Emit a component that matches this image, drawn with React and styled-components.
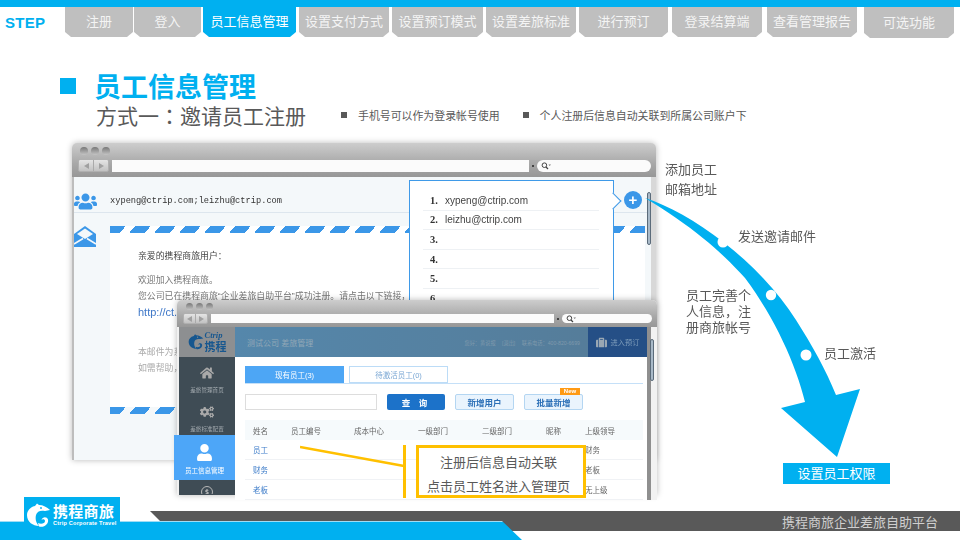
import React from "react";
import styled, { createGlobalStyle } from "styled-components";
import { FaUsers, FaHome, FaCogs, FaUser, FaSuitcase, FaDollarSign } from "react-icons/fa";

const BLUE = "#00b0f0";
const CJK = `"Liberation Sans", "Noto Sans CJK SC", sans-serif`;

const steps = [
  { label: "注册", w: 68, gap: 0 },
  { label: "登入", w: 67, gap: 1 },
  { label: "员工信息管理", w: 93, gap: 2, active: true },
  { label: "设置支付方式", w: 90, gap: 3 },
  { label: "设置预订模式", w: 91, gap: 3 },
  { label: "设置差旅标准", w: 90, gap: 3 },
  { label: "进行预订", w: 89, gap: 3 },
  { label: "登录结算端", w: 90, gap: 4 },
  { label: "查看管理报告", w: 90, gap: 5 },
  { label: "可选功能", w: 90, gap: 7, tall: true },
];

const emails = ["xypeng@ctrip.com", "leizhu@ctrip.com", "", "", "", ""];

const columns = ["姓名", "员工编号", "成本中心", "一级部门", "二级部门", "昵称", "上级领导"];
const staff = [
  { name: "员工", boss: "财务" },
  { name: "财务", boss: "老板" },
  { name: "老板", boss: "无上级" },
];

const GlobalStyle = createGlobalStyle`
  html, body {
    margin: 0;
    padding: 0;
    background: #fff;
    overflow: hidden;
  }
  * {
    box-sizing: border-box;
  }
`;

const Page = styled.div`
  width: 960px;
  height: 540px;
  display: flex;
  flex-direction: column;
  font-family: ${CJK};
  color: #595959;
  background: #fff;
`;

const TopLine = styled.div`
  height: 7px;
  background: ${BLUE};
`;

const StepBar = styled.nav`
  height: 30px;
  display: flex;
  align-items: flex-start;
`;

const StepLabel = styled.div`
  width: 65px;
  padding: 7px 0 0 5px;
  font-size: 15px;
  line-height: 18px;
  font-weight: bold;
  letter-spacing: 0.3px;
  color: ${BLUE};
`;

const Step = styled.div`
  width: ${(p) => p.$w}px;
  margin-left: ${(p) => p.$gap}px;
  height: ${(p) => (p.$tall ? 31 : 30)}px;
  padding-bottom: ${(p) => (p.$tall ? 3 : 4)}px;
  display: flex;
  align-items: center;
  justify-content: center;
  font-size: 13px;
  white-space: nowrap;
  color: ${(p) => (p.$active ? "#fff" : "#f4f4f4")};
  background: ${(p) => (p.$active ? BLUE : "#bfbfbf")};
  clip-path: polygon(0 0, 100% 0, 100% calc(100% - 5px), calc(100% - 6px) 100%, 6px 100%, 0 calc(100% - 5px));
`;

const Heading = styled.header`
  height: 106px;
  padding: 36px 0 0 60px;
  display: grid;
  grid-template-columns: 35px auto;
  grid-template-rows: 30px 28px;
  align-items: center;
`;

const TitleMark = styled.span`
  width: 16px;
  height: 16px;
  margin-top: -4px;
  background: ${BLUE};
`;

const Title = styled.h1`
  margin: 0 0 0 -1px;
  font-size: 27px;
  line-height: 30px;
  font-weight: bold;
  color: ${BLUE};
`;

const SubRow = styled.div`
  grid-column: 2;
  display: flex;
  align-items: center;
  margin-top: -4px;
  padding-left: 1px;
`;

const SubTitle = styled.h2`
  margin: 0 35px 0 0;
  font-size: 21px;
  font-weight: normal;
  white-space: nowrap;
  color: #595959;
`;

const CenterPunct = styled.span`
  font-family: "Noto Sans CJK TC", sans-serif;
`;

const Hint = styled.span`
  display: flex;
  align-items: center;
  gap: 11px;
  margin-right: 23px;
  font-size: 10.9px;
  white-space: nowrap;
  color: #595959;
  &::before {
    content: "";
    width: 6px;
    height: 6px;
    background: #595959;
  }
`;

const Stage = styled.main`
  position: relative;
  height: 354px;
`;

const Browser = styled.section`
  position: absolute;
  left: ${(p) => p.$x}px;
  top: ${(p) => p.$y}px;
  width: ${(p) => p.$w}px;
  height: ${(p) => p.$h}px;
  border-radius: 5px 5px 0 0;
  background: #f1f1f1;
  box-shadow: 0 0 6px rgba(0, 0, 0, 0.28);
  filter: blur(0.3px);
`;

const Chrome = styled.div`
  height: ${(p) => p.$h}px;
  padding: 3px 5px 0 6px;
  border-radius: 5px 5px 0 0;
  background: linear-gradient(#cdcdcd, #a8a8a8 60%, #979797);
`;

const Lights = styled.div`
  display: flex;
  gap: 3px;
  margin-left: ${(p) => p.$left}px;
  height: ${(p) => p.$h}px;
  align-items: center;
`;

const Light = styled.i`
  width: ${(p) => p.$size}px;
  height: ${(p) => p.$size}px;
  border-radius: 50%;
  background: linear-gradient(#777, #c4c4c4);
`;

const AddressRow = styled.div`
  display: flex;
  align-items: center;
  margin-top: 3px;
`;

const NavPair = styled.div`
  width: ${(p) => p.$w}px;
  height: ${(p) => p.$h}px;
  display: flex;
  border-radius: 2px;
  background: linear-gradient(#e4e4e4, #c2c2c2);
  border: 1px solid #b0b0b0;
`;

const NavArrow = styled.span`
  flex: 1;
  display: flex;
  align-items: center;
  justify-content: center;
  & + & {
    border-left: 1px solid #aaa;
  }
  &::before {
    content: "";
    border-top: 3px solid transparent;
    border-bottom: 3px solid transparent;
    border-left: ${(p) => (p.$back ? "0" : "5px solid #a0a0a0")};
    border-right: ${(p) => (p.$back ? "5px solid #a0a0a0" : "0")};
  }
`;

const Url = styled.div`
  width: ${(p) => p.$w}px;
  height: ${(p) => p.$h}px;
  margin-left: 3px;
  background: #fbfbfb;
`;

const Dot = styled.span`
  width: 2px;
  height: 2px;
  margin: 0 3px;
  background: #444;
`;

const SearchBox = styled.div`
  flex: 1;
  height: ${(p) => p.$h}px;
  display: flex;
  align-items: center;
  padding-left: 4px;
  border-radius: 7px;
  background: #fbfbfb;
`;

const MailBody = styled.div`
  position: relative;
  height: 283px;
  border-left: 2px solid #bdbdbd;
  background: #f4f8fa;
`;

const MailHead = styled.div`
  height: 36px;
  display: flex;
  align-items: center;
  padding-top: 13px;
  color: #3b97e8;
  border-bottom: 1px solid #dde6ee;
`;

const HeadIcon = styled.span`
  width: 36px;
  display: flex;
  justify-content: flex-start;
  font-size: 23px;
  line-height: 0;
`;

const Address = styled.span`
  font-family: "Liberation Mono", monospace;
  font-size: 8.7px;
  color: #333;
  white-space: nowrap;
`;

const MailMain = styled.div`
  display: flex;
  padding-top: 13px;
`;

const EnvelopeSlot = styled.div`
  width: 36px;
  display: flex;
  justify-content: flex-start;
`;

const Letter = styled.article`
  width: 535px;
  height: 174px;
  padding: 16px 0 0 28px;
  background: #fff;
  font-size: 8.9px;
  color: #777;
  overflow: hidden;
`;

const StripeBar = styled.div`
  width: 535px;
  height: 7px;
  background: repeating-linear-gradient(130deg, #3b97e8 0 12px, transparent 12px 19.15px);
`;

const LetterColumn = styled.div`
  display: flex;
  flex-direction: column;
`;

const TopStripes = styled(StripeBar)`
  background-color: #fff;
`;

const Greeting = styled.p`
  margin: 0 0 12px;
  color: #444;
  white-space: nowrap;
`;

const LetterLine = styled.p`
  margin: 0 0 ${(p) => p.$after || 4}px;
  line-height: 12px;
  white-space: nowrap;
  color: ${(p) => p.$color || "#777"};
  font-size: ${(p) => p.$size || 8.9}px;
`;

const Popup = styled.div`
  position: absolute;
  left: 335px;
  top: 3px;
  width: 205px;
  height: 280px;
  padding: 10px 14px 0 13px;
  background: #fff;
  border: 1px solid #3f9ae8;
  z-index: 2;
  &::after {
    content: "";
    position: absolute;
    right: -6px;
    top: 14px;
    width: 11px;
    height: 11px;
    background: #fff;
    border-top: 1px solid #3f9ae8;
    border-right: 1px solid #3f9ae8;
    transform: rotate(45deg);
  }
`;

const EmailRow = styled.div`
  height: 19.6px;
  display: flex;
  align-items: center;
  gap: 6px;
  padding-left: 7px;
  border-bottom: 1px solid #eef1f4;
  font-size: 10px;
  color: #444;
`;

const RowNumber = styled.b`
  width: 9px;
  font-family: "Liberation Serif", serif;
  font-size: 10.5px;
  color: #333;
`;

const AddButton = styled.span`
  position: absolute;
  left: 550px;
  top: 14px;
  width: 18px;
  height: 18px;
  border-radius: 50%;
  display: flex;
  align-items: center;
  justify-content: center;
  background: #3b97e8;
  color: #fff;
  font-size: 15px;
  line-height: 18px;
  font-weight: bold;
  z-index: 2;
`;

const Scrollbar = styled.span`
  position: absolute;
  left: ${(p) => p.$x}px;
  top: ${(p) => p.$y}px;
  width: 4px;
  height: ${(p) => p.$h}px;
  border-radius: 2px;
  border: 1px solid #5b6b7a;
  background: #a9bac9;
`;

const EdgeStrip = styled.span`
  position: absolute;
  right: 0;
  top: 0;
  bottom: 0;
  width: 5px;
  background: #d8d8d8;
`;

const AppFrame = styled.div`
  display: grid;
  grid-template-columns: 56px 412px 10px;
  height: 168px;
  padding-left: 2px;
`;

const SideNav = styled.aside`
  display: flex;
  flex-direction: column;
  height: 168px;
  background: #3f4c55;
`;

const BrandCell = styled.div`
  height: 30px;
  flex-shrink: 0;
  display: flex;
  align-items: center;
  justify-content: center;
  gap: 1px;
  background: #8d8f91;
`;

const BrandText = styled.div`
  display: flex;
  flex-direction: column;
  gap: 1px;
  color: #17578f;
  font-weight: bold;
`;

const BrandEn = styled.span`
  font-family: "Liberation Serif", serif;
  font-style: italic;
  font-size: 8.5px;
  line-height: 9px;
`;

const BrandCn = styled.span`
  font-size: 11px;
  line-height: 12px;
  white-space: nowrap;
`;

const SideItem = styled.div`
  height: ${(p) => (p.$active ? 45 : 39)}px;
  flex-shrink: 0;
  margin-left: ${(p) => (p.$active ? -5 : 0)}px;
  padding-top: 9px;
  display: flex;
  flex-direction: column;
  align-items: center;
  gap: ${(p) => (p.$active ? 4 : 6)}px;
  font-size: ${(p) => (p.$active ? 6.5 : 5.6)}px;
  white-space: nowrap;
  color: ${(p) => (p.$active ? "#fff" : "#a2a9ae")};
  background: ${(p) => (p.$active ? "#4da6f8" : "transparent")};
  svg {
    font-size: ${(p) => (p.$active ? 17 : 14)}px;
    color: ${(p) => (p.$active ? "#fff" : "#a9a9a9")};
  }
`;

const SideCutItem = styled.div`
  height: 14px;
  padding-top: 6px;
  display: flex;
  justify-content: center;
  overflow: hidden;
`;

const DollarRing = styled.span`
  width: 12px;
  height: 12px;
  flex-shrink: 0;
  border: 1px solid #b8b8b8;
  border-radius: 50%;
  display: flex;
  align-items: center;
  justify-content: center;
  font-size: 6px;
  color: #c4c4c4;
`;

const AppMain = styled.div`
  display: flex;
  flex-direction: column;
  background: #fff;
`;

const AppHeader = styled.div`
  height: 30px;
  display: flex;
  align-items: center;
  background: linear-gradient(90deg, #5587ab, #557b97);
`;

const CompanyName = styled.span`
  flex: 1;
  padding-left: 12px;
  font-size: 8px;
  color: #93a8b7;
`;

const UserInfo = styled.span`
  margin-right: 8px;
  font-size: 5.2px;
  color: #7f99ac;
  white-space: nowrap;
  word-spacing: 5px;
`;

const BookButton = styled.span`
  width: 59px;
  height: 30px;
  display: flex;
  align-items: center;
  justify-content: center;
  gap: 4px;
  font-size: 7.2px;
  color: #7f9dbb;
  background: #254f86;
  svg {
    font-size: 11px;
    color: #9aa7b3;
  }
`;

const AppContent = styled.div`
  flex: 1;
  display: flex;
  flex-direction: column;
  width: 408px;
  padding-top: 9px;
  background: #fff;
`;

const TabRow = styled.div`
  margin-left: 10px;
  height: 18px;
  display: flex;
  gap: 5px;
  border-bottom: 1px solid #c5e0f8;
`;

const TabItem = styled.span`
  width: 99px;
  display: flex;
  align-items: center;
  justify-content: center;
  font-size: 7.5px;
  color: ${(p) => (p.$on ? "#fff" : "#7aa7d4")};
  background: ${(p) => (p.$on ? "#4da6f5" : "#fff")};
  border: 1px solid ${(p) => (p.$on ? "#4da6f5" : "#bcdcf7")};
`;

const ToolRow = styled.div`
  margin: 10px 0 10px 10px;
  height: 16px;
  display: flex;
`;

const SearchInput = styled.div`
  width: 132px;
  border: 1px solid #ddd;
  background: #fff;
`;

const QueryButton = styled.span`
  width: 58px;
  margin-left: 10px;
  display: flex;
  align-items: center;
  justify-content: center;
  gap: 2px;
  border-radius: 2px;
  background: #1c72c9;
  color: #fff;
  font-size: 8.5px;
  font-weight: bold;
  letter-spacing: 3px;
`;

const GhostButton = styled.span`
  position: relative;
  width: 59px;
  margin-left: 10px;
  display: flex;
  align-items: center;
  justify-content: center;
  border-radius: 2px;
  border: 1px solid #b4d6f2;
  background: #eaf4fd;
  color: #2b6fb7;
  font-size: 8.5px;
  font-weight: bold;
`;

const NewTag = styled.em`
  position: absolute;
  right: 2px;
  top: -7px;
  width: 20px;
  height: 7px;
  font-style: normal;
  font-size: 6px;
  line-height: 7px;
  text-align: center;
  color: #fff;
  background: #ff9a14;
`;

const Grid = styled.div`
  margin-left: 10px;
  display: grid;
  grid-template-columns: 46px 63px 64px 64px 64px 39px 58px;
  grid-auto-rows: 20px;
  align-items: center;
  font-size: 7.5px;
  color: #666;
  white-space: nowrap;
`;

const HeadCell = styled.span`
  height: 20px;
  display: flex;
  align-items: center;
  padding-left: ${(p) => (p.$first ? 8 : 0)}px;
  background: #f6fafc;
`;

const BodyCell = styled.span`
  height: 20px;
  display: flex;
  align-items: center;
  padding-left: ${(p) => (p.$first ? 8 : 0)}px;
  border-bottom: 1px solid #f0f2f5;
  color: ${(p) => (p.$first ? "#3d7cc9" : "#666")};
`;

const ScrollGutter = styled.div`
  position: relative;
  background: linear-gradient(90deg, #8f8f8f 0 4px, #f2f2f2 4px);
`;

const Overlay = styled.svg`
  position: absolute;
  left: 640px;
  top: 50px;
  pointer-events: none;
`;

const Note = styled.span`
  position: absolute;
  left: ${(p) => p.$x}px;
  top: ${(p) => p.$y}px;
  width: ${(p) => (p.$w ? `${p.$w}px` : "auto")};
  font-size: 13px;
  line-height: ${(p) => p.$lh || 17}px;
  color: #595959;
  white-space: ${(p) => (p.$w ? "normal" : "nowrap")};
`;

const CalloutBox = styled.div`
  position: absolute;
  left: 416px;
  top: 302px;
  width: 170px;
  height: 53px;
  padding: 3px 5px 0 0;
  border: 3px solid #ffc000;
  background: #fff;
  text-align: center;
  font-size: 13px;
  line-height: 24px;
  color: #595959;
`;

const CalloutBracket = styled.span`
  position: absolute;
  left: 403px;
  top: 302px;
  width: 3px;
  height: 53px;
  background: #ffc000;
`;

const Leader = styled.svg`
  position: absolute;
  left: 300px;
  top: 302px;
`;

const PermissionTag = styled.div`
  position: absolute;
  left: 783px;
  top: 320px;
  width: 107px;
  height: 21px;
  line-height: 21px;
  text-align: center;
  font-size: 13px;
  color: #fff;
  background: ${BLUE};
`;

const Footer = styled.footer`
  height: 43px;
  display: grid;
`;

const GrayBand = styled.div`
  grid-area: 1 / 1;
  margin: 14px 0 0 150px;
  height: 20px;
  display: flex;
  align-items: center;
  justify-content: flex-end;
  padding-right: 22px;
  font-size: 13px;
  color: #cfcfcf;
  background: #595959;
  clip-path: polygon(0 0, 100% 0, 100% 100%, 20px 100%);
`;

const BlueBand = styled.div`
  grid-area: 1 / 1;
  align-self: end;
  width: 522px;
  height: 19px;
  background: linear-gradient(#9fdcf5 0 1px, ${BLUE} 1px);
  clip-path: polygon(0 0, 502px 0, 100% 100%, 0 100%);
`;

const LogoBox = styled.div`
  grid-area: 1 / 1;
  justify-self: start;
  position: relative;
  z-index: 1;
  margin-left: 24px;
  width: 96px;
  display: flex;
  padding: 6px 0 0 2px;
  background: ${BLUE};
  color: #fff;
`;

const LogoWords = styled.div`
  display: flex;
  flex-direction: column;
  padding-top: 1px;
  margin-left: 2px;
`;

const LogoCn = styled.span`
  font-size: 15px;
  line-height: 15px;
  font-weight: bold;
  letter-spacing: 0.3px;
  white-space: nowrap;
`;

const LogoEn = styled.span`
  font-size: 5.6px;
  line-height: 8px;
  font-weight: bold;
  letter-spacing: 0.2px;
  white-space: nowrap;
`;

function Dolphin({ size, color, eye }) {
  return (
    <svg width={size} height={size} viewBox="0 0 25 25" style={{ flexShrink: 0 }}>
      <path
        fill={color}
        d="M11 0.5 L13 2 C17 2 21 4 24 7 L19 8 C15 7 11 8 10 12 C9 16 10 20 13 23 C7 23 1 19 1 12 C1 8 4 4 9 3 Z"
      />
      <path
        fill={color}
        d="M13 23.5 C18 25 23 21 22 16.5 C21 13.5 16.5 13.5 15.5 17 C16.5 15.5 19 16 19 18 C19 20.5 15 21.5 12 20 Z"
      />
      <circle cx="15" cy="5" r="0.9" fill={eye} />
    </svg>
  );
}

function SearchGlyph() {
  return (
    <svg width="10" height="8" viewBox="0 0 10 8">
      <circle cx="3.4" cy="3.2" r="2.3" fill="none" stroke="#444" strokeWidth="1" />
      <path d="M5 5 L7 7" stroke="#444" strokeWidth="1.2" />
      <path d="M7.5 2.5 H10 L8.7 4 Z" fill="#777" />
    </svg>
  );
}

function EnvelopeGlyph() {
  return (
    <svg width="22" height="22" viewBox="0 0 22 22">
      <path fill="#3b97e8" d="M0 8 L11 0 L22 8 L22 21 L0 21 Z" />
      <path fill="#f4f8fa" d="M3 8 L11 2.5 L19 8 L11 13 Z" />
      <path fill="none" stroke="#f4f8fa" strokeWidth="1.6" d="M0 18 L9 12.5 M22 18 L13 12.5" />
    </svg>
  );
}

function WindowChrome({ big }) {
  const lightSize = big ? 8 : 7;
  return (
    <Chrome $h={big ? 34 : 27}>
      <Lights $left={big ? 2 : 3} $h={big ? 10 : 7}>
        <Light $size={lightSize} />
        <Light $size={lightSize} />
        <Light $size={lightSize} />
      </Lights>
      <AddressRow>
        <NavPair $w={big ? 31 : 25} $h={big ? 13 : 11}>
          <NavArrow $back />
          <NavArrow />
        </NavPair>
        <Url $w={big ? 417 : 343} $h={big ? 12 : 9} />
        <Dot />
        <SearchBox $h={big ? 12 : 9}>
          <SearchGlyph />
        </SearchBox>
      </AddressRow>
    </Chrome>
  );
}

function MailWindow() {
  return (
    <Browser $x={72} $y={0} $w={584} $h={317}>
      <WindowChrome big />
      <MailBody>
        <MailHead>
          <HeadIcon>
            <FaUsers />
          </HeadIcon>
          <Address>xypeng@ctrip.com;leizhu@ctrip.com</Address>
        </MailHead>
        <MailMain>
          <EnvelopeSlot>
            <EnvelopeGlyph />
          </EnvelopeSlot>
          <LetterColumn>
            <TopStripes />
            <Letter>
              <Greeting>亲爱的携程商旅用户：</Greeting>
              <LetterLine>欢迎加入携程商旅。</LetterLine>
              <LetterLine>您公司已在携程商旅“企业差旅自助平台”成功注册。请点击以下链接，</LetterLine>
              <LetterLine $color="#3f78c8" $size={11} $after={28}>
                http://ct.ctrip.com
              </LetterLine>
              <LetterLine $color="#aaa">本邮件为系统自动发送</LetterLine>
              <LetterLine $color="#aaa">如需帮助，请联系客服</LetterLine>
            </Letter>
            <StripeBar />
          </LetterColumn>
        </MailMain>
        <Popup>
          {emails.map((email, i) => (
            <EmailRow key={i}>
              <RowNumber>{i + 1}.</RowNumber>
              {email}
            </EmailRow>
          ))}
        </Popup>
        <AddButton>+</AddButton>
        <EdgeStrip />
        <Scrollbar $x={573} $y={15} $h={53} />
      </MailBody>
    </Browser>
  );
}

function PortalWindow() {
  return (
    <Browser $x={177} $y={157} $w={480} $h={195}>
      <WindowChrome />
      <AppFrame>
        <SideNav>
          <BrandCell>
            <Dolphin size={16} color="#17578f" eye="#8d8f91" />
            <BrandText>
              <BrandEn>Ctrip</BrandEn>
              <BrandCn>携程</BrandCn>
            </BrandText>
          </BrandCell>
          <SideItem>
            <FaHome />
            差旅管理首页
          </SideItem>
          <SideItem>
            <FaCogs />
            差旅标准配置
          </SideItem>
          <SideItem $active>
            <FaUser />
            员工信息管理
          </SideItem>
          <SideCutItem>
            <DollarRing>
              <FaDollarSign />
            </DollarRing>
          </SideCutItem>
        </SideNav>
        <AppMain>
          <AppHeader>
            <CompanyName>测试公司 差旅管理</CompanyName>
            <UserInfo>您好：黄说报 [退出] 联系电话：400-820-6699</UserInfo>
            <BookButton>
              <FaSuitcase />
              进入预订
            </BookButton>
          </AppHeader>
          <AppContent>
            <TabRow>
              <TabItem $on>现有员工(3)</TabItem>
              <TabItem>待激活员工(0)</TabItem>
            </TabRow>
            <ToolRow>
              <SearchInput />
              <QueryButton>查 询</QueryButton>
              <GhostButton>新增用户</GhostButton>
              <GhostButton>
                批量新增
                <NewTag>New</NewTag>
              </GhostButton>
            </ToolRow>
            <Grid>
              {columns.map((c, i) => (
                <HeadCell key={c} $first={i === 0}>
                  {c}
                </HeadCell>
              ))}
              {staff.map((s) =>
                columns.map((c, i) => (
                  <BodyCell key={s.name + c} $first={i === 0}>
                    {i === 0 ? s.name : i === 6 ? s.boss : ""}
                  </BodyCell>
                ))
              )}
            </Grid>
          </AppContent>
        </AppMain>
        <ScrollGutter>
          <Scrollbar $x={3} $y={12} $h={42} />
        </ScrollGutter>
      </AppFrame>
    </Browser>
  );
}

export default function App() {
  return (
    <Page>
      <GlobalStyle />
      <TopLine />
      <StepBar>
        <StepLabel>STEP</StepLabel>
        {steps.map((s) => (
          <Step key={s.label} $w={s.w} $gap={s.gap} $active={s.active} $tall={s.tall}>
            {s.label}
          </Step>
        ))}
      </StepBar>
      <Heading>
        <TitleMark />
        <Title>员工信息管理</Title>
        <SubRow>
          <SubTitle>
            方式一<CenterPunct>：</CenterPunct>邀请员工注册
          </SubTitle>
          <Hint>手机号可以作为登录帐号使用</Hint>
          <Hint>个人注册后信息自动关联到所属公司账户下</Hint>
        </SubRow>
      </Heading>
      <Stage>
        <MailWindow />
        <PortalWindow />
        <Overlay width="230" height="270" viewBox="640 193 230 270">
          <path
            fill={BLUE}
            d="M645 198 C690 212 760 262 796 320 C812 345 826 370 836 395 L860 389 L837 457 L781 408 L805 402 C796 365 775 318 745 278 C720 250 690 225 645 198 Z"
          />
          <circle cx="723" cy="242" r="5.5" fill="#fff" />
          <circle cx="771" cy="295" r="5.2" fill="#fff" />
          <circle cx="806" cy="355" r="5.5" fill="#fff" />
        </Overlay>
        <Note $x={665} $y={18}>添加员工</Note>
        <Note $x={665} $y={38}>邮箱地址</Note>
        <Note $x={738} $y={85}>发送邀请邮件</Note>
        <Note $x={686} $y={145} $w={68} $lh={16}>员工完善个人信息，注册商旅帐号</Note>
        <Note $x={824} $y={202}>员工激活</Note>
        <PermissionTag>设置员工权限</PermissionTag>
        <Leader width="106" height="24" viewBox="0 0 106 24">
          <path d="M0 2 L104 21" stroke="#ffc000" strokeWidth="2.5" fill="none" />
        </Leader>
        <CalloutBracket />
        <CalloutBox>
          注册后信息自动关联
          <br />
          点击员工姓名进入管理页
        </CalloutBox>
      </Stage>
      <Footer>
        <GrayBand>携程商旅企业差旅自助平台</GrayBand>
        <BlueBand />
        <LogoBox>
          <Dolphin size={25} color="#fff" eye={BLUE} />
          <LogoWords>
            <LogoCn>携程商旅</LogoCn>
            <LogoEn>Ctrip Corporate Travel</LogoEn>
          </LogoWords>
        </LogoBox>
      </Footer>
    </Page>
  );
}
